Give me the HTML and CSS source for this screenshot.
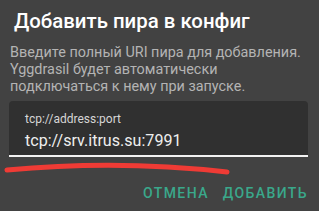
FILE: index.html
```html
<!DOCTYPE html>
<html lang="ru">
<head>
    <meta charset="UTF-8">
    <meta name="viewport" content="width=device-width, initial-scale=1.0">
    <title>Добавить пира</title>
    <link rel="stylesheet" href="styles.css">
</head>
<body>
    <div class="dialog">
        <h1 class="title">Добавить пира в конфиг</h1>
        <p class="message">Введите полный URI пира для добавления. Yggdrasil будет автоматически подключаться к нему при запуске.</p>
        <div class="field">
            <div class="field-label">tcp://address:port</div>
            <div class="field-value">tcp://srv.itrus.su:7991</div>
        </div>
        <svg class="scribble" width="240" height="20" viewBox="0 0 240 20">
            <path d="M4 13 C 57 8, 137 5, 224 15" fill="none" stroke="#ef3b35" stroke-width="5" stroke-linecap="round"/>
        </svg>
        <div class="actions">
            <button class="action">Отмена</button>
            <button class="action">Добавить</button>
        </div>
    </div>
</body>
</html>
```

FILE: styles.css
```css
body {
    margin: 0;
    background-color: #424242;
    font-family: Roboto, "Noto Sans", sans-serif;
}
.dialog {
    width: 319px;
    height: 211px;
    padding: 0 11px 0 9px;
    box-sizing: border-box;
    overflow: hidden;
}
.title {
    margin: 0;
    padding: 9px 0 0 5px;
    font-size: 20.4px;
    font-weight: 500;
    line-height: 24px;
    color: #ffffff;
}
.message {
    margin: 11px 0 0 1px;
    font-size: 14.4px;
    line-height: 17px;
    color: #b4b4b4;
}
.field {
    margin-top: 6px;
    height: 56px;
    background-color: #303030;
    border-radius: 4px 4px 0 0;
    border-bottom: 2px solid #f2f2f2;
    padding: 11px 0 0 16px;
    box-sizing: border-box;
}
.field-label {
    font-size: 12px;
    line-height: 14px;
    color: #d6d6d6;
}
.field-value {
    margin-top: 5px;
    font-size: 16.1px;
    line-height: 20px;
    color: #eeeeee;
}
.scribble {
    display: block;
    margin-left: -6px;
}
.actions {
    display: flex;
    justify-content: flex-end;
    gap: 14px;
    margin-top: 8px;
}
.action {
    padding: 0;
    border: none;
    background: none;
    font-family: inherit;
    font-size: 14px;
    font-weight: 500;
    letter-spacing: 1.4px;
    text-transform: uppercase;
    color: #3aa88b;
}
```
